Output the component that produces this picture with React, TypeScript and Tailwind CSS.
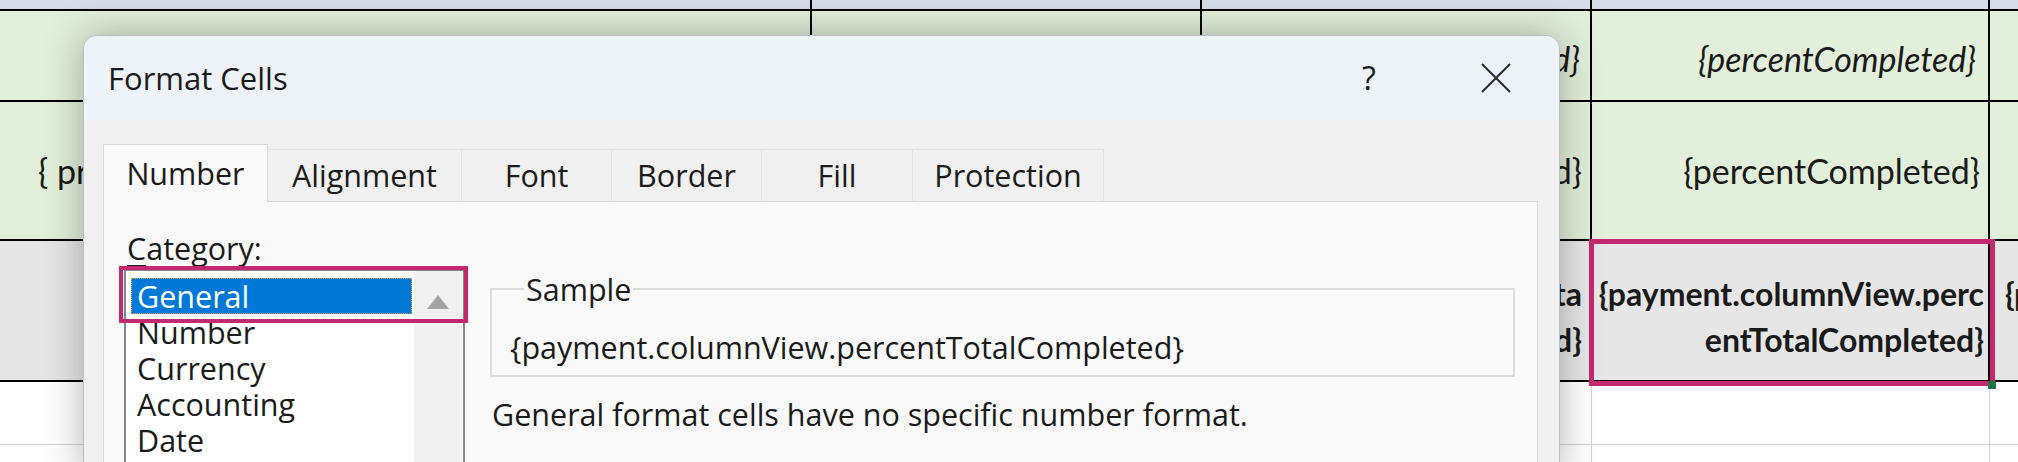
import React from "react";

const widths = ["w-[812px]", "w-[390px]", "w-[390px]", "w-[398px]", "w-[398px]"];

interface SheetRowProps {
  height: string;
  bg: string;
  bottom: string;
  side: string;
  cells?: React.ReactNode[];
}

const SheetRow: React.FC<SheetRowProps> = ({ height, bg, bottom, side, cells }) => {
  return (
    <div className={`flex shrink-0 ${height} ${bg} ${bottom}`}>
      {widths.map((w, i) => (
        <div
          key={i}
          className={`${w} shrink-0 h-full overflow-hidden flex items-center justify-end ${side}`}
        >
          {cells?.[i]}
        </div>
      ))}
    </div>
  );
};

const categories = ["General", "Number", "Currency", "Accounting", "Date", "Time"];
const tabs = [
  { label: "Number", w: "w-[165px]" },
  { label: "Alignment", w: "w-[194px]" },
  { label: "Font", w: "w-[150px]" },
  { label: "Border", w: "w-[150px]" },
  { label: "Fill", w: "w-[151px]" },
  { label: "Protection", w: "w-[191px]" },
];

const TotalCell = ({ className }: { className: string }) => (
  <div className={`font-bold text-[32px] text-right leading-[46px] whitespace-nowrap pt-[12px] ${className}`}>
    <div>{"{payment.columnView.perc"}</div>
    <div>{"entTotalCompleted}"}</div>
  </div>
);

const Sheet = () => (
  <div className="flex flex-col w-[2018px] font-['Lato',sans-serif] text-[34px] text-[#1a1a1a]">
    <SheetRow height="h-[11px]" bg="bg-[#d6dbe8]" bottom="border-b-2 border-black" side="border-r-2 border-black" />
    <SheetRow
      height="h-[91px]"
      bg="bg-[#e2efda]"
      bottom="border-b-2 border-black"
      side="border-r-2 border-black"
      cells={[
        null,
        null,
        <span key="a" className="italic whitespace-nowrap pr-[10px] pt-[6px]">{"{prevPercentCompleted}"}</span>,
        <span key="b" className="italic whitespace-nowrap pr-[12px] pt-[6px]">{"{percentCompleted}"}</span>,
        null,
      ]}
    />
    <SheetRow
      height="h-[139px]"
      bg="bg-[#e2efda]"
      bottom="border-b-2 border-black"
      side="border-r-2 border-black"
      cells={[
        <span key="a" className="whitespace-nowrap w-full pl-[38px]">{"{ prevPercent }"}</span>,
        null,
        <span key="c" className="whitespace-nowrap pr-[8px]">{"{prevPercentCompleted}"}</span>,
        <span key="d" className="whitespace-nowrap pr-[8px]">{"{percentCompleted}"}</span>,
        null,
      ]}
    />
    <SheetRow
      height="h-[141px]"
      bg="bg-[#e6e6e6]"
      bottom="border-b-2 border-black"
      side="border-r-2 border-black"
      cells={[
        null,
        null,
        <div key="c" className="font-bold text-[32px] text-right leading-[46px] whitespace-nowrap pr-[8px] pt-[12px]">
          <div>{"{payment.rowView.percentTota"}</div>
          <div>{"lCompleted}"}</div>
        </div>,
        <TotalCell key="d" className="pr-[4px]" />,
        <TotalCell key="e" className="w-full text-left pl-[15px]" />,
      ]}
    />
    <SheetRow height="h-[63px]" bg="bg-white" bottom="border-b border-[#d4d4d4]" side="border-r border-[#d4d4d4]" />
    <SheetRow height="h-[30px]" bg="bg-white" bottom="" side="border-r border-[#d4d4d4]" />
  </div>
);

const FormatCellsDialog = () => (
  <div className="absolute left-[83px] top-[35px] w-[1477px] h-[440px] flex flex-col rounded-t-[14px] overflow-hidden border border-[#bdbdbd] bg-[#f0f0f0] shadow-[0_0_40px_rgba(0,0,0,0.3)] font-['Open_Sans',sans-serif] text-[#1b1b1b]">
    {/* title bar */}
    <div className="h-[84px] shrink-0 bg-[#eef2f9] flex items-center pl-[24px] pr-[43px]">
      <span className="text-[31px]">Format Cells</span>
      <div className="flex-1" />
      <span className="w-[40px] text-center text-[32px]">?</span>
      <div className="w-[40px] h-[40px] ml-[87px] flex items-center justify-center">
        <svg width="30" height="30" viewBox="0 0 30 30">
          <path d="M1 1 L29 29 M29 1 L1 29" stroke="#2b2b2b" strokeWidth="2" fill="none" />
        </svg>
      </div>
    </div>

    {/* tabs */}
    <div className="flex items-end pl-[19px] pt-[23px] h-[81px] shrink-0 text-[30.5px]">
      {tabs.map((t, i) =>
        i === 0 ? (
          <div
            key={t.label}
            className={`${t.w} h-[58px] -mb-px relative z-10 bg-[#f9f9f9] border border-b-0 border-[#d9d9d9] flex items-center justify-center`}
          >
            {t.label}
          </div>
        ) : (
          <div
            key={t.label}
            className={`${t.w} h-[52px] bg-[#f0f0f0] border border-l-0 border-b-0 border-[#e2e2e2] flex items-center justify-center`}
          >
            {t.label}
          </div>
        )
      )}
    </div>

    {/* panel */}
    <div className="relative ml-[19px] w-[1435px] flex-1 bg-[#f9f9f9] border border-[#d9d9d9] flex text-[30.5px]">
      <div className="flex flex-col pl-[20px] pt-[28px]">
        <div className="h-[36px] leading-[36px] pl-[3px]">
          <span className="underline underline-offset-[5px]">C</span>ategory:
        </div>
        <div className="mt-[3px] w-[341px] h-[300px] border-2 border-[#858585] bg-white flex gap-[2px]">
          <div className="w-[286px] pl-[5px] pt-[7px] flex flex-col">
            {categories.map((c, i) => (
              <div
                key={c}
                className={`h-[36px] leading-[36px] pl-[6px] ${
                  i === 0
                    ? "bg-[#0078d7] text-white outline-1 outline-dotted outline-[#f0a030] -outline-offset-1"
                    : ""
                }`}
              >
                {c}
              </div>
            ))}
          </div>
          <div className="w-[48px] bg-[#f0f0f0] flex justify-center pt-[23px]">
            <svg width="24" height="16" viewBox="0 0 24 16">
              <polygon points="12,1 23,15 1,15" fill="#a3a3a3" />
            </svg>
          </div>
        </div>
      </div>

      <div className="flex flex-col ml-[25px] pt-[69px] w-[1025px]">
        <fieldset className="h-[106px] border-2 border-[#dcdcdc] pl-[18px]">
          <legend className="ml-[14px] px-[2px] leading-[36px]">Sample</legend>
          <div className="pt-[22px] leading-[36px] whitespace-nowrap">
            {"{payment.columnView.percentTotalCompleted}"}
          </div>
        </fieldset>
        <div className="mt-[19px] pl-[2px] leading-[36px] whitespace-nowrap">
          General format cells have no specific number format.
        </div>
      </div>

      {/* highlight around the selected category */}
      <div className="absolute left-[15px] top-[64px] w-[349px] h-[57px] border-[4px] border-[#c4286e]" />
    </div>
  </div>
);

export default function App() {
  return (
    <div className="relative w-[2018px] h-[462px] overflow-hidden bg-white">
      <Sheet />
      <FormatCellsDialog />
      {/* selected cell */}
      <div className="absolute left-[1589px] top-[239px] w-[406px] h-[147px] border-[5px] border-[#c4286e]" />
      <div className="absolute left-[1988px] top-[381px] w-[8px] h-[8px] bg-[#217346]" />
    </div>
  );
}
